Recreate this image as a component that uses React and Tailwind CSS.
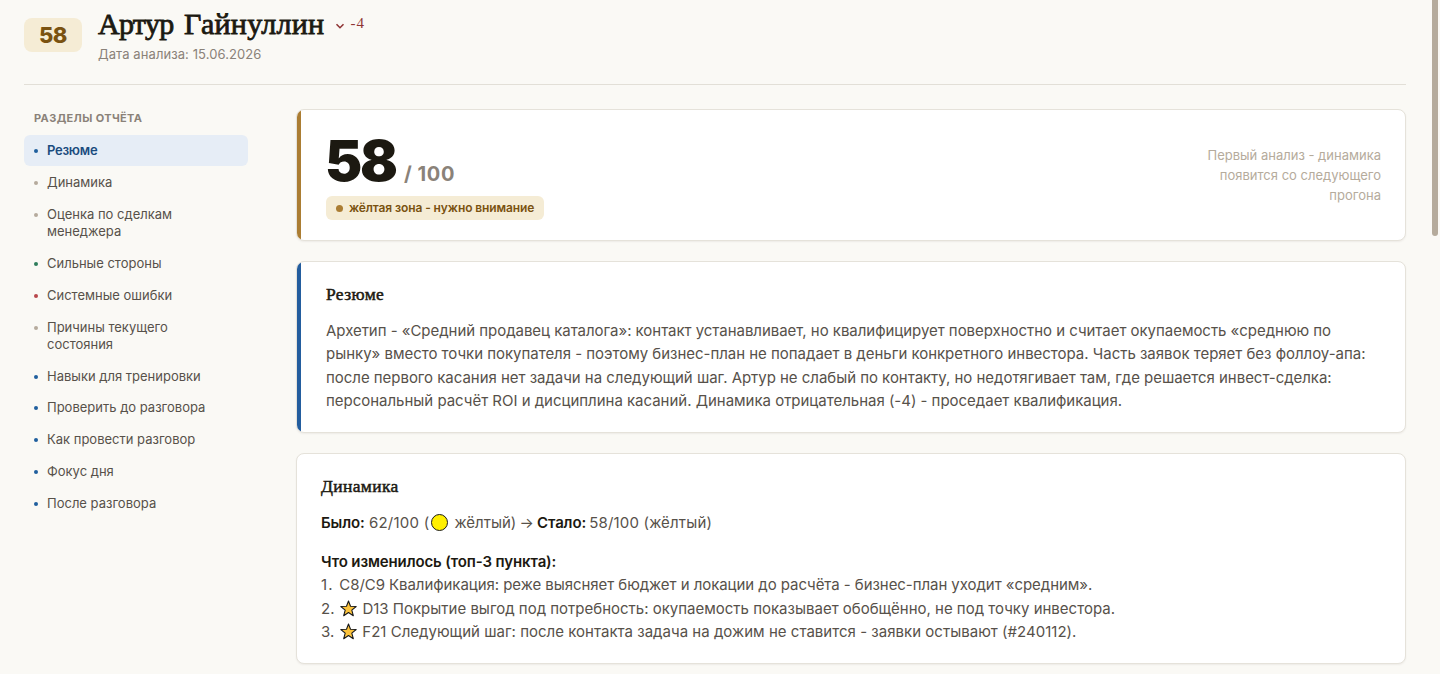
import React from "react";

const sections = [
  { title: "Резюме", dot: "bg-[#1f5f9e]", active: true },
  { title: "Динамика", dot: "bg-[#b5ab9c]" },
  { title: "Оценка по сделкам менеджера", dot: "bg-[#b5ab9c]" },
  { title: "Сильные стороны", dot: "bg-[#2e7d5b]" },
  { title: "Системные ошибки", dot: "bg-[#b8474b]" },
  { title: "Причины текущего состояния", dot: "bg-[#b5ab9c]" },
  { title: "Навыки для тренировки", dot: "bg-[#1f5f9e]" },
  { title: "Проверить до разговора", dot: "bg-[#1f5f9e]" },
  { title: "Как провести разговор", dot: "bg-[#1f5f9e]" },
  { title: "Фокус дня", dot: "bg-[#1f5f9e]" },
  { title: "После разговора", dot: "bg-[#1f5f9e]" },
];

const Star = () => (
  <svg viewBox="0 0 17 17" className="inline-block w-[17px] h-[17px] mr-[1.5px] ml-px align-[-3px]">
    <path
      d="M8.5 1 L10.5 6.3 L16.2 6.5 L11.8 10.1 L13.3 15.7 L8.5 12.5 L3.7 15.7 L5.2 10.1 L0.8 6.5 L6.5 6.3 Z"
      fill="#fcc33c"
      stroke="#1a1a1a"
      strokeWidth="1.1"
      strokeLinejoin="round"
    />
  </svg>
);

const Card = ({ accent, className, children }) => (
  <section
    className={`flex overflow-hidden rounded-lg border border-[#e5e2da] bg-white shadow-[0_1px_2px_rgba(28,25,17,0.06)] ${className}`}
  >
    {accent && <div className={`w-1 shrink-0 ${accent}`} />}
    {children}
  </section>
);

const CardTitle = ({ children }) => (
  <h3 className="font-['Liberation_Serif',serif] text-[17.5px] leading-6 tracking-[0.35px] [-webkit-text-stroke:0.5px_#1c1911]">
    {children}
  </h3>
);

const App = () => {
  return (
    <div className="flex h-[674px] overflow-hidden bg-[#faf9f5] font-['Inter','Noto_Sans',sans-serif] text-[#1c1911]">
      <div className="w-[1432px] shrink-0 pl-6 pr-[26px]">
        <header className="flex h-[85px] items-start border-b border-[#e2dfd7]">
          <div className="mt-[18px] flex h-[34px] w-[58px] items-center justify-center rounded-lg bg-[#f5ecd5] text-[22px] font-extrabold tracking-[-0.4px] text-[#7a5210]">
            58
          </div>
          <div className="ml-4">
            <div className="flex items-center h-[47px]">
              <h1 className="font-['Liberation_Serif',serif] text-[30px] whitespace-nowrap [-webkit-text-stroke:0.8px_#1c1911] [word-spacing:3px]">
                <span className="tracking-[-0.7px]">Артур</span> <span className="tracking-[0.3px]">Гайнуллин</span>
              </h1>
              <svg viewBox="0 0 10 10" className="ml-[11px] mt-1 h-2.5 w-2.5">
                <path d="M1.5 3.3 L5 6.7 L8.5 3.3" fill="none" stroke="#8f3535" strokeWidth="1.6" />
              </svg>
              <span className="ml-[5px] font-['Liberation_Serif',serif] text-[15px] tracking-[1px] text-[#8f3535]">-4</span>
            </div>
            <p className="-mt-[3px] text-[13px] leading-5 tracking-[0.08px] text-[#8a8279]">Дата анализа: 15.06.2026</p>
          </div>
        </header>

        <div className="flex gap-12 pt-6">
          <nav className="w-56 shrink-0">
            <h2 className="h-[26px] pl-2.5 text-[11px] leading-[18px] font-bold tracking-[0.37px] text-[#8a8279]">
              РАЗДЕЛЫ ОТЧЁТА
            </h2>
            <ul className="flex flex-col gap-px">
              {sections.map((item) => (
                <li
                  key={item.title}
                  className={`flex items-start gap-[9px] rounded-md px-2.5 pt-[7.4px] pb-[6.6px] text-[13px] leading-[16.9px] ${
                    item.active ? "bg-[#e6edf6] font-semibold tracking-[-0.25px] text-[#1b4b7e]" : "text-[#57514a]"
                  }`}
                >
                  <span className={`mt-[7px] h-1 w-1 shrink-0 rounded-full ${item.dot}`} />
                  <span className="max-w-[172px] min-w-0">{item.title}</span>
                </li>
              ))}
            </ul>
          </nav>

          <main className="flex min-w-0 flex-1 flex-col">
            <Card accent="bg-[#ab7d33]" className="h-[132px]">
              <div className="flex flex-1 items-center justify-between pr-6 pl-[25px]">
                <div className="pt-[3px]">
                  <div className="flex items-baseline">
                    <span className="-ml-px text-[56px] leading-[56px] font-black tracking-[-2.2px]">58</span>
                    <span className="ml-2 text-[20px] font-bold tracking-[0.6px] text-[#8a8279]">/ 100</span>
                  </div>
                  <div className="mt-[7px] flex h-6 w-[218px] items-center gap-1.5 rounded-md bg-[#f5ecd5] px-2.5 text-xs font-semibold tracking-[-0.1px] whitespace-nowrap text-[#7a5210]">
                    <span className="h-[7px] w-[7px] shrink-0 rounded-full bg-[#ab7d33]" />
                    жёлтая зона - нужно внимание
                  </div>
                </div>
                <p className="text-right text-[13px] leading-5 text-[#b5ab9c]">
                  Первый анализ - динамика
                  <br />
                  появится со следующего
                  <br />
                  прогона
                </p>
              </div>
            </Card>

            <Card accent="bg-[#235d9e]" className="mt-5 h-[172px]">
              <div className="pt-5 pl-[25px]">
                <CardTitle>Резюме</CardTitle>
                <div className="mt-[13px] text-[15px] leading-[23.4px] whitespace-nowrap text-[#57514a]">
                  <p className="tracking-[-0.035px]">Архетип - «Средний продавец каталога»: контакт устанавливает, но квалифицирует поверхностно и считает окупаемость «среднюю по</p>
                  <p className="tracking-[-0.023px]">рынку» вместо точки покупателя - поэтому бизнес-план не попадает в деньги конкретного инвестора. Часть заявок теряет без фоллоу-апа:</p>
                  <p className="tracking-[-0.032px]">после первого касания нет задачи на следующий шаг. Артур не слабый по контакту, но недотягивает там, где решается инвест-сделка:</p>
                  <p className="tracking-[-0.018px]">персональный расчёт ROI и дисциплина касаний. Динамика отрицательная (-4) - проседает квалификация.</p>
                </div>
              </div>
            </Card>

            <Card className="mt-5 h-[211px]">
              <div className="pt-5 pl-6">
                <CardTitle>Динамика</CardTitle>
                <div className="mt-[13px] text-[15px] leading-[23.4px] whitespace-nowrap text-[#57514a]">
                  <p className="mb-[15.5px]">
                    <b className="font-semibold tracking-[-0.12px] text-[#1c1911]">Было:</b>{" "}
                    <span className="tracking-[0.25px]">62/100 (</span>
                    <span className="mr-[6px] ml-[2px] inline-block h-[17px] w-[17px] rounded-full border border-[#1a1a1a] bg-[#ffef00] align-[-3px]" />
                    жёлтый)<span className="-mx-px"> → </span>
                    <b className="font-semibold tracking-[-0.12px] text-[#1c1911]">Стало:</b>{" "}
                    <span className="-ml-px tracking-[0.16px]">58/100 (жёлтый)</span>
                  </p>
                  <p className="font-semibold tracking-[-0.12px] text-[#1c1911]">Что изменилось (топ-3 пункта):</p>
                  <p className="tracking-[-0.055px]">
                    <span className="tracking-[1.2px]">1. </span>
                    C8/C9 Квалификация: реже выясняет бюджет и локации до расчёта - бизнес-план уходит «средним».
                  </p>
                  <p>2. <Star /> D13 Покрытие выгод под потребность: окупаемость показывает обобщённо, не под точку инвестора.</p>
                  <p className="tracking-[0.02px]">3. <Star /> F21 Следующий шаг: после контакта задача на дожим не ставится - заявки остывают (#240112).</p>
                </div>
              </div>
            </Card>
          </main>
        </div>
      </div>
      <div className="h-[236px] w-1.5 rounded-b-full bg-[#b5ab9c]" />
    </div>
  );
};

export default App;
